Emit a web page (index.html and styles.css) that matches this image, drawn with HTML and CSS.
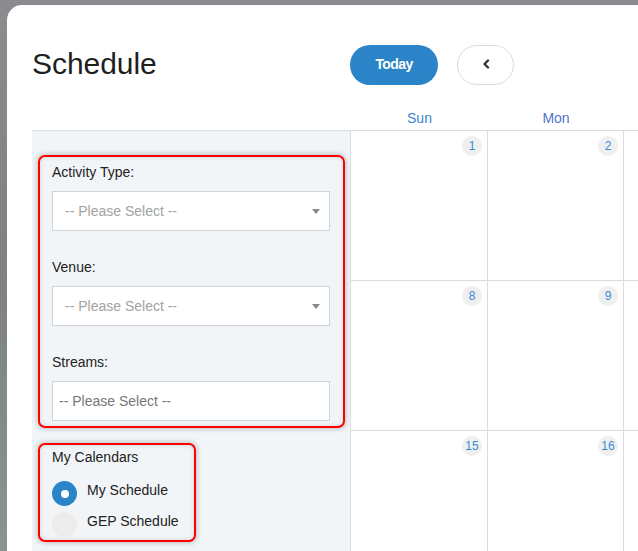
FILE: index.html
```html
<!DOCTYPE html>
<html lang="en">
<head>
<meta charset="utf-8">
<title>Schedule</title>
<link rel="stylesheet" href="styles.css">
</head>
<body>
<div class="card">
  <h1 class="title">Schedule</h1>
  <div class="toolbar">
    <button class="btn-today">Today</button>
    <button class="btn-prev" aria-label="Previous">
      <svg width="8" height="10" viewBox="0 0 8 10"><polyline points="6,1.5 2.5,5 6,8.5" fill="none" stroke="#333" stroke-width="2.4" stroke-linecap="round" stroke-linejoin="round"/></svg>
    </button>
  </div>
  <div class="head-spacer"></div>
  <div class="days">
    <div class="dayname sun">Sun</div>
    <div class="dayname mon">Mon</div>
    <div class="dayname"></div>
  </div>

  <aside class="sidebar">
    <div class="filters annot">
      <div class="field">
        <div class="label">Activity Type:</div>
        <div class="select">
          <span>-- Please Select --</span>
          <svg width="8" height="5" viewBox="0 0 8 5"><polygon points="0,0 8,0 4,5" fill="#888"/></svg>
        </div>
      </div>
      <div class="field">
        <div class="label">Venue:</div>
        <div class="select">
          <span>-- Please Select --</span>
          <svg width="8" height="5" viewBox="0 0 8 5"><polygon points="0,0 8,0 4,5" fill="#888"/></svg>
        </div>
      </div>
      <div class="field">
        <div class="label">Streams:</div>
        <div class="input">-- Please Select --</div>
      </div>
    </div>

    <div class="calendars annot">
      <div class="label">My Calendars</div>
      <div class="radio-row">
        <span class="radio checked"></span>
        <span class="radio-text">My Schedule</span>
      </div>
      <div class="radio-row">
        <span class="radio"></span>
        <span class="radio-text">GEP Schedule</span>
      </div>
    </div>
  </aside>

  <div class="month">
    <div class="cell"><span class="num">1</span></div>
    <div class="cell"><span class="num">2</span></div>
    <div class="cell"></div>
    <div class="cell"><span class="num">8</span></div>
    <div class="cell"><span class="num">9</span></div>
    <div class="cell"></div>
    <div class="cell"><span class="num">15</span></div>
    <div class="cell"><span class="num">16</span></div>
    <div class="cell"></div>
  </div>
</div>
</body>
</html>
```

FILE: styles.css
```css
* { box-sizing: border-box; }

html, body {
  margin: 0;
  height: 100%;
  overflow: hidden;
}

body {
  background: linear-gradient(180deg, #8b8c90 0%, #7e8184 50%, #8a9393 100%);
  font-family: "Liberation Sans", Arial, Helvetica, sans-serif;
  color: #222;
}

.card {
  margin: 5px 0 0 7px;
  height: 546px;
  overflow: hidden;
  background: #fff;
  border-top-left-radius: 15px;
  padding-left: 25px;
  display: grid;
  grid-template-columns: 318px 1fr;
  grid-template-rows: 80px 46px 1fr;
}

.title {
  margin: 0;
  padding-top: 39px;
  font-size: 30px;
  line-height: 40px;
  font-weight: normal;
  color: #1f1f1f;
  letter-spacing: -0.05px;
}

.toolbar {
  padding-top: 40px;
  display: flex;
  gap: 19px;
}

.btn-today {
  width: 88px;
  height: 40px;
  border: none;
  border-radius: 20px;
  background: #2a84c7;
  color: #fff;
  font-family: inherit;
  font-size: 14px;
  font-weight: bold;
  letter-spacing: -0.6px;
  padding: 0 0 2px;
}

.btn-prev {
  width: 57px;
  height: 40px;
  border: 1px solid #d3dce2;
  border-radius: 20px;
  background: #fff;
  display: flex;
  align-items: center;
  justify-content: center;
  padding: 0 0 3px;
}

.head-spacer {
  border-bottom: 1px solid #dcdcdc;
}

.days {
  display: grid;
  grid-template-columns: 137px 136px 1fr;
  border-bottom: 1px solid #dcdcdc;
  padding-left: 1px;
  align-items: end;
  padding-bottom: 4px;
}

.dayname {
  text-align: center;
  font-size: 14px;
  line-height: 16px;
  color: #3b86cf;
}

.dayname.mon { color: #4f73c6; }

.sidebar {
  background: #f2f5f7;
  padding: 24px 5px 0 6px;
}

.annot {
  border: 2px solid #f00;
  border-radius: 7px;
  box-shadow: 0 0 5px 1px rgba(0, 0, 0, 0.22), inset 0 0 5px rgba(0, 0, 0, 0.12);
}

.filters {
  padding: 7px 13px 5px 12px;
}

.field + .field { margin-top: 28px; }

.label {
  font-size: 14px;
  line-height: 16px;
  color: #222;
  margin-bottom: 11px;
}

.select, .input {
  height: 40px;
  background: #fff;
  border: 1px solid #cdd3d8;
  font-size: 14px;
  display: flex;
  align-items: center;
}

.select {
  justify-content: space-between;
  padding: 0 9px 0 12px;
  color: #a2a2a2;
}

.input {
  padding-left: 6px;
  color: #777;
}

.calendars {
  margin-top: 15px;
  width: 158px;
  padding: 4px 12px 3px;
}

.calendars .label { margin-bottom: 16px; }

.radio-row {
  display: flex;
  align-items: flex-start;
  gap: 10px;
  height: 25px;
}

.radio-row + .radio-row { margin-top: 6px; }

.radio {
  width: 25px;
  height: 25px;
  border-radius: 50%;
  background: #ececec;
  flex: none;
  display: flex;
  align-items: center;
  justify-content: center;
}

.radio.checked { background: #2a84c7; }

.radio.checked::after {
  content: "";
  width: 8px;
  height: 8px;
  border-radius: 50%;
  background: #fff;
}

.radio-text {
  font-size: 14px;
  line-height: 16px;
  padding-top: 1px;
  color: #222;
}

.month {
  display: grid;
  grid-template-columns: 137px 136px 1fr;
  grid-auto-rows: 150px;
  border-left: 1px solid #dcdcdc;
  align-content: start;
}

.cell {
  border-right: 1px solid #dcdcdc;
  border-bottom: 1px solid #dcdcdc;
  display: flex;
  justify-content: flex-end;
  align-items: flex-start;
  padding: 5px 5px 0 0;
}

.cell:nth-child(3n) { border-right: none; }

.num {
  width: 20px;
  height: 20px;
  border-radius: 50%;
  background: #efefef;
  color: #3a8ad2;
  font-size: 12px;
  line-height: 20px;
  text-align: center;
}
```
